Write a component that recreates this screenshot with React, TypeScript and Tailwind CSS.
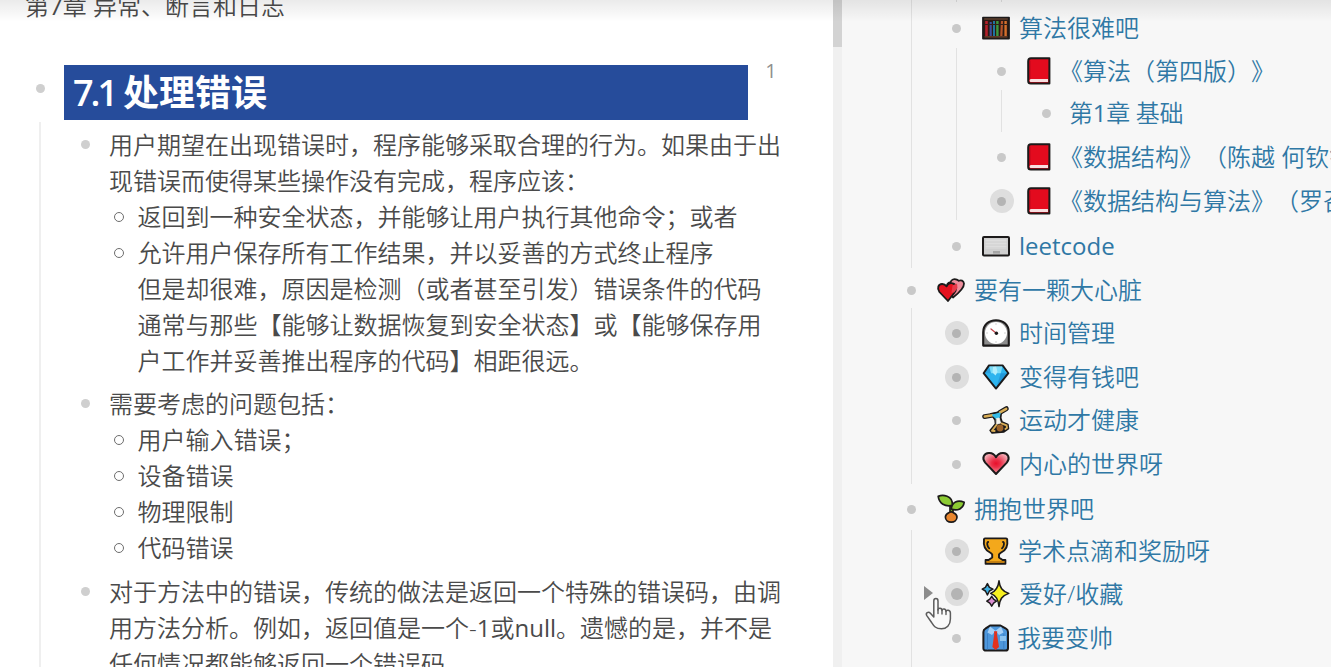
import React from "react";

type IconName =
  | "shelf" | "book" | "laptop" | "hearts" | "clock" | "gem" | "tumble"
  | "heart" | "sprout" | "trophy" | "sparkles" | "shirt";

type TreeRow = {
  text: string;
  depth: number;
  height: string;
  icon?: IconName;
  collapsed?: boolean;
  textClass?: string;
  active?: boolean;
};

const rows: TreeRow[] = [
  { text: "算法很难吧", depth: 1, height: "h-[44px]", icon: "shelf" },
  { text: "《算法（第四版）》", depth: 2, height: "h-[42px]", icon: "book", textClass: "ml-1" },
  { text: "第1章 基础", depth: 3, height: "h-[42px]", textClass: "ml-0 tracking-[-0.3px]" },
  { text: "《数据结构》（陈越 何钦铭", depth: 2, height: "h-[46px]", icon: "book", textClass: "ml-1" },
  { text: "《数据结构与算法》（罗召", depth: 2, height: "h-[42px]", icon: "book", collapsed: true, textClass: "ml-1" },
  { text: "leetcode", depth: 1, height: "h-[48px]", icon: "laptop" },
  { text: "要有一颗大心脏", depth: 0, height: "h-[40px]", icon: "hearts" },
  { text: "时间管理", depth: 1, height: "h-[46px]", icon: "clock", collapsed: true },
  { text: "变得有钱吧", depth: 1, height: "h-[42px]", icon: "gem", collapsed: true },
  { text: "运动才健康", depth: 1, height: "h-[44px]", icon: "tumble" },
  { text: "内心的世界呀", depth: 1, height: "h-[44px]", icon: "heart" },
  { text: "拥抱世界吧", depth: 0, height: "h-[46px]", icon: "sprout" },
  { text: "学术点滴和奖励呀", depth: 1, height: "h-[38px]", icon: "trophy", collapsed: true, textClass: "ml-2" },
  { text: "爱好/收藏", depth: 1, height: "h-[48px]", icon: "sparkles", collapsed: true, active: true },
  { text: "我要变帅", depth: 1, height: "h-[40px]", icon: "shirt", textClass: "ml-[7px]" },
];

const HEART = "M14 24 L3.2 12.6 C-0.6 8 2 3.2 6.8 3 C10 2.8 12.6 4.6 14 7.2 C15.4 4.6 18 2.8 21.2 3 C26 3.2 28.6 8 24.8 12.6 Z";

function Icon({ name }: { name: IconName }) {
  const ink = "#1c1a1a";
  return (
    <svg viewBox="0 0 28 28" className="h-7 w-7 shrink-0 overflow-visible" strokeLinejoin="round" strokeLinecap="round">
      {name === "shelf" && (
        <g>
          <rect x="1" y="3.6" width="26" height="21" fill="#2a1a14" stroke={ink} strokeWidth="1.8" />
          <rect x="2.2" y="4.4" width="23.6" height="1.2" fill="#6d4a35" />
          <path d="M4.5 7V22" stroke="#b3202a" strokeWidth="2.6" strokeLinecap="butt" />
          <path d="M8.7 8V22" stroke="#3c4f9a" strokeWidth="2.2" strokeLinecap="butt" />
          <path d="M12 7V22" stroke="#1f7fb0" strokeWidth="1.8" strokeLinecap="butt" />
          <path d="M15.4 7V22" stroke="#3c9a3f" strokeWidth="2.4" strokeLinecap="butt" />
          <path d="M20 7L19.3 22" stroke="#b5542a" strokeWidth="2.2" strokeLinecap="butt" />
          <path d="M23.6 7V22" stroke="#d5702c" strokeWidth="2.4" strokeLinecap="butt" />
          <path d="M3 10.5H25" stroke="#33201a" strokeWidth="1.1" />
          <path d="M3 22.8H25" stroke="#70452f" strokeWidth="1.2" />
        </g>
      )}
      {name === "book" && (
        <g transform="translate(-0.8 0)">
          <path d="M4.8 1.2H23.2V26.6H4.6C3 26.6 2 25.6 2 24V4.4C2 2.4 3 1.2 4.8 1.2Z" fill="#e30b1e" stroke={ink} strokeWidth="2" />
          <path d="M4.2 22H21.8V25H4.2C3.2 24 3.2 23 4.2 22Z" fill="#f8dfe0" />
          <path d="M3.6 4V22" stroke="#a80818" strokeWidth="1" />
        </g>
      )}
      {name === "laptop" && (
        <g>
          <rect x="1" y="5" width="26" height="18.4" rx="1" fill="#cfcfcf" stroke={ink} strokeWidth="2" />
          <path d="M3.5 7.5H24.5V17H3.5Z" fill="#dedede" />
          <path d="M3.5 10H24.5M3.5 13H24.5M3.5 16H24.5" stroke="#cbcbcb" strokeWidth="0.8" />
          <rect x="11" y="19" width="7" height="2.6" fill="#a5a5a5" />
        </g>
      )}
      {name === "hearts" && (
        <g stroke={ink} strokeWidth="1.8">
          <path d="M16 21.5L10 13C9 8.5 11 6.4 13.5 6.2C14.4 3.4 17 2.6 19.8 3.6C20.8 4 21.4 4.4 21.8 4.8C24 3.6 26.6 4.6 27 7.6C27.2 12.4 21 17.6 16 21.5Z" fill="#ee8d9c" />
          <path d="M11 25L2.4 16C-0.4 12 1.4 8.2 5 8C7 7.9 8.4 8.8 9.6 10.4C10.8 7.6 13.8 6.4 16.4 7.6C20 9.4 19.6 13.6 17.4 16.8Z" fill="#e5121f" />
          <path d="M15.5 9.5L20 7.5L20.5 12L17.4 16.2L14.5 17Z" fill="#e83a4a" stroke="none" />
        </g>
      )}
      {name === "clock" && (
        <g>
          <path d="M1.2 26.6V13.2C1.2 6 6.5 1.2 14 1.2S26.8 6 26.8 13.2V26.6Z" fill="#8d8d8d" stroke={ink} strokeWidth="2.1" />
          <circle cx="14" cy="14" r="11" fill="#fff" />
          <path d="M14 4.5V5.6M14 22.4V23.5M4.5 14H5.6M22.4 14H23.5" stroke="#c4c4c4" strokeWidth="0.8" />
          <path d="M9 10L14 14" stroke="#c2454b" strokeWidth="1.3" />
          <circle cx="14.4" cy="14.3" r="1.7" fill={ink} />
        </g>
      )}
      {name === "gem" && (
        <g>
          <path d="M7 2.4H20.6L26.4 10.2L14 25.6L1.6 10.2Z" fill="#2db4ee" />
          <path d="M7 2.4L9 10.2H1.6Z" fill="#2aa0de" />
          <path d="M7 2.4H20.6L18.8 10.2H9Z" fill="#7bdcf8" />
          <path d="M11 4L14 3L15.5 9L13.5 12.5L10.5 9.5Z" fill="#b2eefc" />
          <path d="M18.8 10.2H26.4L14 25.6Z" fill="#2398d8" />
          <path d="M7 2.4H20.6L26.4 10.2L14 25.6L1.6 10.2Z" fill="none" stroke={ink} strokeWidth="1.9" />
        </g>
      )}
      {name === "tumble" && (
        <g>
          <path d="M2.6 10.6L12 9M24.4 2.6L17.6 6.6" stroke={ink} strokeWidth="4.8" />
          <path d="M8.8 7.6L19.5 5.4L18.8 12L20.2 16L26 18.4L26.6 22.6L22 26L10 27L8 24.4L13.4 18L13 14Z" fill={ink} stroke={ink} strokeWidth="1.4" />
          <path d="M2.8 10.6L10.5 9.2M24.2 2.8L18 6.4" stroke="#d9ad55" strokeWidth="2.5" />
          <path d="M10.6 9L18 7.2L17 12L14 12.4Z" fill="#35bce9" stroke="#35bce9" strokeWidth="1.2" />
          <path d="M14.6 12.6L17.2 12L18.6 17L14.8 18.2Z" fill="#f4f4ee" stroke="#f4f4ee" strokeWidth="0.8" />
          <path d="M14.4 19L10 24.8L12.6 25M19.4 17.4L24.6 19.4L25 21.8L23.4 23" stroke="#d9ad55" strokeWidth="1.9" fill="none" />
          <circle cx="18" cy="22" r="3.4" fill="#9b622a" />
        </g>
      )}
      {name === "heart" && (
        <g>
          <defs>
            <radialGradient id="heartFill" cx="50%" cy="50%" r="52%">
              <stop offset="0" stopColor="#e80f2a" />
              <stop offset="0.35" stopColor="#ea3048" />
              <stop offset="0.8" stopColor="#f08391" />
              <stop offset="1" stopColor="#f5aab3" />
            </radialGradient>
          </defs>
          <path d={HEART} fill="url(#heartFill)" stroke={ink} strokeWidth="2" />
        </g>
      )}
      {name === "sprout" && (
        <g stroke={ink} strokeWidth="1.7">
          <path d="M13 19V11H16V19Z" fill="#79b82b" />
          <path d="M1.2 1.4C5.4 -0.4 16 0 15.4 10.4C8 12 2.2 8.6 1.2 1.4Z" fill="#8ccb33" />
          <path d="M27.2 7.2C20.5 4.4 15 7 14.2 14C20.5 16.4 26.4 13.6 27.2 7.2Z" fill="#8ccb33" />
          <path d="M14.2 16.6C12.2 18 8.4 18.2 8.4 22C8.4 25.2 11.2 27.2 14.2 27.2S20 25.2 20 22C20 18.4 16.2 18 14.2 16.6Z" fill="#e9862e" />
        </g>
      )}
      {name === "trophy" && (
        <g stroke={ink} strokeWidth="1.9">
          <path d="M2 2.4Q2 1.4 3 1.4H24Q25.2 1.4 25.2 2.4C26 8 24.2 13.6 18.6 15.8L17 17.4V20.4L20.6 23H23.4V26.8H3.6V23H6.6L10.2 20.4V17.4L8.6 15.8C3 13.6 1.2 8 2 2.4Z" fill="#f3a81b" />
          <path d="M6.2 5C4.8 5 4.8 9 7.2 11.4M21 5C22.4 5 22.4 9 20 11.4" fill="none" strokeWidth="1.8" />
          <path d="M5 24.9H22" stroke="#b9740e" strokeWidth="1.4" />
        </g>
      )}
      {name === "sparkles" && (
        <g stroke={ink} strokeWidth="1.5">
          <path d="M5.4 3.6L7.4 7.4L11 9.2L7.4 11L5.4 15L3.4 11L0.2 9.2L3.4 7.4Z" fill="#3fb0e3" />
          <path d="M9.7 16.4L11.6 19.2L14.4 21.2L11.6 23.2L9.7 26.2L7.8 23.2L4.8 21.2L7.8 19.2Z" fill="#d98fd0" />
          <path d="M17 0.8C17.8 7.5 20 11 26.8 13.4C20 15.8 17.8 19 17 26.6C16.2 19 14.2 15.8 8.6 13.4C14.2 11 16.2 7.5 17 0.8Z" fill="#f8f020" />
        </g>
      )}
      {name === "shirt" && (
        <g>
          <path d="M8 1.6H18.5L24 4.6C25.2 5.2 26 6.4 26 8V24.2C26 25.8 25.2 26.6 23.6 26.6H4C2.4 26.6 1.4 25.8 1.4 24.2V8C1.4 6.4 2 5.2 3.4 4.6Z" fill="#4d97dc" stroke={ink} strokeWidth="2" />
          <path d="M5.5 10V25M21.8 10V25" stroke="#3b80c6" strokeWidth="1" />
          <path d="M18 12H24V17H18Z" fill="#8cc4f0" />
          <path d="M8 2.5L13.5 6.8L19 2.5L21.5 8.5L17 11L13.5 7L10 11L5.5 8.5Z" fill="#a7d0f5" />
          <path d="M12 7.2H15.2L15 10.5L17 23L13.6 26L10.4 23L12.2 10.5Z" fill="#e2311d" />
        </g>
      )}
    </svg>
  );
}

/** Latin runs are set one step heavier so they carry the same weight as the Chinese text. */
function Mixed({ text }: { text: string }) {
  return (
    <span>
      {text.split(/([A-Za-z0-9]+)/).map((part, i) =>
        i % 2 ? <span key={i} className="font-normal">{part}</span> : part,
      )}
    </span>
  );
}

function Guide() {
  return <span className="relative -top-[2px] flex w-[45px] shrink-0 justify-center self-stretch"><span className="w-px bg-[#e2e2e2]" /></span>;
}

function Hand() {
  return (
    <svg viewBox="0 0 28 34" className="absolute left-[924px] top-[597px] h-[34px] w-7" strokeLinejoin="round" strokeLinecap="round">
      <path
        d="M9.8 20V4C9.8 0.8 14 0.8 14 4V13C14 10.6 18 10.6 18 13.4C18 11.4 22 11.4 22 14.4C22.4 12.6 26.4 12.8 26.4 16V22C26.4 28 22.5 31.8 17.5 31.8C11.5 31.8 9.8 29 7.6 25.5L2.8 18.6C1.2 15.8 4.4 14 6.4 16.2Z"
        fill="#fafafa" stroke="#5c5c5c" strokeWidth="1.5"
      />
      <path d="M14 12.5V16.5M18 13.5V17M22 14.5V17.5" stroke="#5c5c5c" strokeWidth="1.4" fill="none" />
    </svg>
  );
}

function TreeItem({ row }: { row: TreeRow }) {
  return (
    <li className={`flex items-center whitespace-nowrap ${row.height}`}>
      {Array.from({ length: row.depth }, (_, i) => <Guide key={i} />)}
      <span className="relative flex w-[45px] shrink-0 justify-center">
        {row.active && <span className="absolute -left-[10px] top-[4px] h-0 w-0 border-y-[7px] border-l-[9px] border-y-transparent border-l-[#8c8c8c]" />}
        <span className={`flex h-6 w-6 items-center justify-center rounded-full ${row.collapsed ? "bg-[#dedede]" : ""}`}>
          <span className={`rounded-full ${row.active ? "h-3 w-3 bg-[#b4b4b4]" : row.collapsed ? "h-[9px] w-[9px] bg-[#b4b4b4]" : "h-[9px] w-[9px] bg-[#c9c9c9]"}`} />
        </span>
      </span>
      {row.icon && <span className="ml-[3px]"><Icon name={row.icon} /></span>}
      <span className={row.textClass ?? "ml-[9px]"}><Mixed text={row.text} /></span>
    </li>
  );
}

function Note({ lines, className = "" }: { lines: { text: string; kind?: "dot" | "cont" }[]; className?: string }) {
  return (
    <section className={`flex ${className}`}>
      <span className="ml-[81px] mt-[13px] h-[9px] w-[9px] shrink-0 rounded-full bg-[#cfcfcf]" />
      <div className="ml-[19px] whitespace-nowrap">
        {lines.map((l) => (
          <div key={l.text} className="flex h-9 items-center leading-9">
            {l.kind && (
              <span className="flex w-[28.5px] shrink-0 pl-[5px]">
                {l.kind === "dot" && <span className="h-[10px] w-[10px] rounded-full border-[1.5px] border-[#6d6d6d]" />}
              </span>
            )}
            <Mixed text={l.text} />
          </div>
        ))}
      </div>
    </section>
  );
}

export default function App() {
  return (
    <div className="relative flex h-[667px] w-[1331px] overflow-hidden bg-white font-['Open_Sans','Noto_Sans_CJK_SC',sans-serif] text-2xl font-[350] text-[#4a4a4a] [text-spacing-trim:space-all]">
      <main className="h-full w-[833px] shrink-0 overflow-hidden">
        <h2 className="-mt-3 ml-[25px] h-9 whitespace-nowrap leading-9"><Mixed text="第7章 异常、断言和日志" /></h2>
        <div className="mt-[41px] flex h-[55px]">
          <span className="ml-9 mt-[19px] h-[9px] w-[9px] shrink-0 rounded-full bg-[#cfcfcf]" />
          <h1 className="ml-[19px] flex h-[55px] w-[684px] items-center whitespace-pre bg-[#264c9b] pl-[9px] text-4xl font-bold text-white">
            <span className="w-[50px] shrink-0 font-semibold tracking-[-3px]">7.1</span>
            <span>处理错误</span>
          </h1>
          <span className="-mt-[5px] ml-[11px] flex h-[22px] w-6 items-center justify-center text-xl font-normal text-[#8f8f8f]">1</span>
        </div>
        <div className="relative pt-[7px]">
          <span className="absolute left-[39px] top-[2px] h-[560px] w-[2px] bg-[#efefef]" />
          <Note lines={[
            { text: "用户期望在出现错误时，程序能够采取合理的行为。如果由于出" },
            { text: "现错误而使得某些操作没有完成，程序应该：" },
            { text: "返回到一种安全状态，并能够让用户执行其他命令；或者", kind: "dot" },
            { text: "允许用户保存所有工作结果，并以妥善的方式终止程序", kind: "dot" },
            { text: "但是却很难，原因是检测（或者甚至引发）错误条件的代码", kind: "cont" },
            { text: "通常与那些【能够让数据恢复到安全状态】或【能够保存用", kind: "cont" },
            { text: "户工作并妥善推出程序的代码】相距很远。", kind: "cont" },
          ]} />
          <Note className="mt-[7px]" lines={[
            { text: "需要考虑的问题包括：" },
            { text: "用户输入错误；", kind: "dot" },
            { text: "设备错误", kind: "dot" },
            { text: "物理限制", kind: "dot" },
            { text: "代码错误", kind: "dot" },
          ]} />
          <Note className="mt-2" lines={[
            { text: "对于方法中的错误，传统的做法是返回一个特殊的错误码，由调" },
            { text: "用方法分析。例如，返回值是一个-1或null。遗憾的是，并不是" },
            { text: "任何情况都能够返回一个错误码" },
          ]} />
        </div>
      </main>
      <div className="h-full w-[9px] shrink-0 bg-[#f0f0f0]"><div className="h-[47px] bg-[#d3d3d3]" /></div>
      <aside className="h-full min-w-0 flex-1 overflow-hidden bg-[#f7f7f7] text-[#2f78a5]">
        <div className="ml-[47px] flex h-[6px]">
          <Guide />
          <span className="flex h-[2px] w-[45px] justify-center"><span className="w-px bg-[#dcdcdc]" /></span>
          <span className="flex h-[2px] w-[45px] justify-center"><span className="w-px bg-[#dcdcdc]" /></span>
        </div>
        <ul className="ml-[47px]">
          {rows.map((row) => <TreeItem key={row.text} row={row} />)}
          <li className="flex h-10"><Guide /></li>
        </ul>
      </aside>
      <div className="pointer-events-none absolute inset-x-0 top-0 h-[22px] bg-linear-to-b from-black/8 to-transparent" />
      <Hand />
    </div>
  );
}
